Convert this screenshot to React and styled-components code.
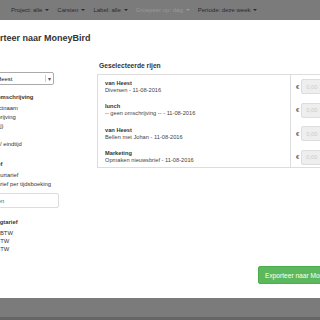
import React from "react";
import styled, { createGlobalStyle } from "styled-components";

const GlobalStyle = createGlobalStyle`
  html, body {
    margin: 0;
    padding: 0;
    background: #7b7b7b;
  }
  body {
    font-family: "Liberation Sans", Arial, sans-serif;
    color: #333;
  }
`;

const navItems = [
  { label: "Project: alle" },
  { label: "Carsten" },
  { label: "Label: alle" },
  { label: "Groepeer op: dag", muted: true },
  { label: "Periode: deze week" },
];

const rows = [
  { title: "van Heest", sub: "Diversen - 11-08-2016" },
  { title: "lunch", sub: "-- geen omschrijving -- - 11-08-2016" },
  { title: "van Heest", sub: "Bellen met Johan - 11-08-2016" },
  { title: "Marketing", sub: "Opmaken nieuwsbrief - 11-08-2016" },
];

function App() {
  return (
    <Page>
      <GlobalStyle />
      <NavBar>
        {navItems.map((item) => (
          <NavItem key={item.label} $muted={item.muted}>
            {item.label}
            <Caret />
          </NavItem>
        ))}
      </NavBar>
      <Modal>
        <Title>Exporteer naar MoneyBird</Title>
        <Body>
          <LeftCol>
            <Select>
              <span>van Heest</span>
              <SelectArrow>▾</SelectArrow>
            </Select>
            <Heading $indent={1}>Factuur omschrijving</Heading>
            <Option $indent={12}>Projectnaam</Option>
            <Option $indent={9}>Omschrijving</Option>
            <Option>Uren (j)</Option>
            <Option>&nbsp;</Option>
            <Option>Start- / eindtijd</Option>
            <Heading $top={10}>Uurtarief</Heading>
            <Option>Vast uurtarief</Option>
            <Option $indent={13}>Uurtarief per tijdsboeking</Option>
            <TextInput>Bedragen</TextInput>
            <Heading $top={9}>BTW dagtarief</Heading>
            <Option $tight>Geen BTW</Option>
            <Option $tight>Incl. BTW</Option>
            <Option $tight $indent={9}>Excl. BTW</Option>
          </LeftCol>
          <RightCol>
            <SubHeading>Geselecteerde rijen</SubHeading>
            <Table>
              <RowList>
                {rows.map((r, i) => (
                  <Row key={i}>
                    <RowTitle>{r.title}</RowTitle>
                    <RowSub>{r.sub}</RowSub>
                  </Row>
                ))}
              </RowList>
              <AmountList>
                {rows.map((r, i) => (
                  <AmountRow key={i}>
                    <Euro>€</Euro>
                    <Amount>0,00</Amount>
                  </AmountRow>
                ))}
              </AmountList>
            </Table>
          </RightCol>
        </Body>
        <Footer>
          <ExportButton>Exporteer naar MoneyBird</ExportButton>
        </Footer>
      </Modal>
      <BottomBar />
    </Page>
  );
}

export default App;

const Page = styled.div`
  width: 320px;
  height: 320px;
  overflow: hidden;
  background: #7b7b7b;
  display: flex;
  flex-direction: column;
`;

const NavBar = styled.div`
  height: 19px;
  flex-shrink: 0;
  display: flex;
  align-items: center;
  padding-left: 11px;
  gap: 8px;
  white-space: nowrap;
`;

const NavItem = styled.div`
  font-size: 6px;
  color: ${(p) => (p.$muted ? "#9a9a9a" : "#2b2b2b")};
  display: flex;
  align-items: center;
  gap: 3px;
`;

const Caret = styled.span`
  width: 0;
  height: 0;
  border-left: 2px solid transparent;
  border-right: 2px solid transparent;
  border-top: 2px solid currentColor;
`;

const Modal = styled.div`
  height: 278px;
  flex-shrink: 0;
  margin-top: 1px;
  margin-left: -27px;
  width: 380px;
  background: #fff;
  display: flex;
  flex-direction: column;
`;

const Title = styled.div`
  font-size: 9px;
  font-weight: bold;
  color: #333;
  padding: 13px 0 0 5px;
  height: 26px;
  box-sizing: border-box;
  white-space: nowrap;
`;

const Body = styled.div`
  display: flex;
  padding-top: 17px;
  gap: 38px;
  flex: 1;
`;

const LeftCol = styled.div`
  width: 86px;
  display: flex;
  flex-direction: column;
  white-space: nowrap;
  padding-top: 9px;
`;

const Select = styled.div`
  height: 13px;
  margin-right: 5px;
  border: 1px solid #aaa;
  border-radius: 2px;
  box-sizing: border-box;
  display: flex;
  align-items: center;
  justify-content: space-between;
  padding: 0 2px 0 12px;
  font-size: 5.85px;
  color: #222;
  margin-bottom: 7px;
`;

const SelectArrow = styled.span`
  font-size: 6px;
  color: #555;
  border-left: 1px solid #ccc;
  padding-left: 2px;
`;

const Heading = styled.div`
  font-size: 5.85px;
  font-weight: bold;
  color: #333;
  line-height: 10px;
  padding-left: ${(p) => p.$indent ?? 5}px;
  margin-top: ${(p) => p.$top || 0}px;
  margin-bottom: 2px;
`;

const SubHeading = styled.div`
  font-size: 6.7px;
  font-weight: bold;
  color: #333;
  line-height: 10px;
  margin-left: 2px;
  margin-bottom: 2px;
`;

const Option = styled.div`
  font-size: 5.85px;
  color: #333;
  line-height: ${(p) => (p.$tight ? 8 : 9)}px;
  padding-left: ${(p) => p.$indent ?? 11}px;
`;

const TextInput = styled.div`
  height: 15px;
  margin-top: 4px;
  border: 1px solid #ddd;
  border-radius: 2px;
  box-sizing: border-box;
  font-size: 5.85px;
  display: flex;
  align-items: center;
  padding-left: 5px;
  color: #555;
`;

const RightCol = styled.div`
  flex: 1;
  display: flex;
  flex-direction: column;
  margin-top: -2px;
`;

const Table = styled.div`
  margin-top: 1px;
  border: 1px solid #ddd;
  display: flex;
  height: 94px;
  box-sizing: border-box;
`;

const RowList = styled.div`
  width: 193px;
  border-right: 1px solid #ddd;
  padding: 0 7px;
  box-sizing: border-box;
`;

const Row = styled.div`
  height: 23.5px;
  display: flex;
  flex-direction: column;
  justify-content: center;
`;

const RowTitle = styled.div`
  font-size: 5.7px;
  font-weight: bold;
  color: #333;
  line-height: 7px;
`;

const RowSub = styled.div`
  font-size: 5.7px;
  color: #444;
  line-height: 7px;
`;

const AmountList = styled.div`
  padding: 0 0 0 5px;
`;

const AmountRow = styled.div`
  height: 23.5px;
  display: flex;
  align-items: center;
  gap: 2px;
`;

const Euro = styled.span`
  font-size: 6px;
  color: #444;
`;

const Amount = styled.div`
  width: 40px;
  height: 15px;
  background: #eee;
  border: 1px solid #ddd;
  border-radius: 2px;
  box-sizing: border-box;
  font-size: 5.7px;
  color: #ccc;
  display: flex;
  align-items: center;
  padding-left: 4px;
`;

const Footer = styled.div`
  display: flex;
  padding-left: 285px;
  padding-bottom: 14px;
`;

const ExportButton = styled.div`
  background: #5cb85c;
  border: 1px solid #4cae4c;
  border-radius: 2px;
  color: #fff;
  font-size: 6.6px;
  height: 18px;
  box-sizing: border-box;
  display: flex;
  align-items: center;
  padding: 0 6px;
  white-space: nowrap;
`;

const BottomBar = styled.div`
  flex: 1;
  border-bottom: 3px solid #666;
`;
